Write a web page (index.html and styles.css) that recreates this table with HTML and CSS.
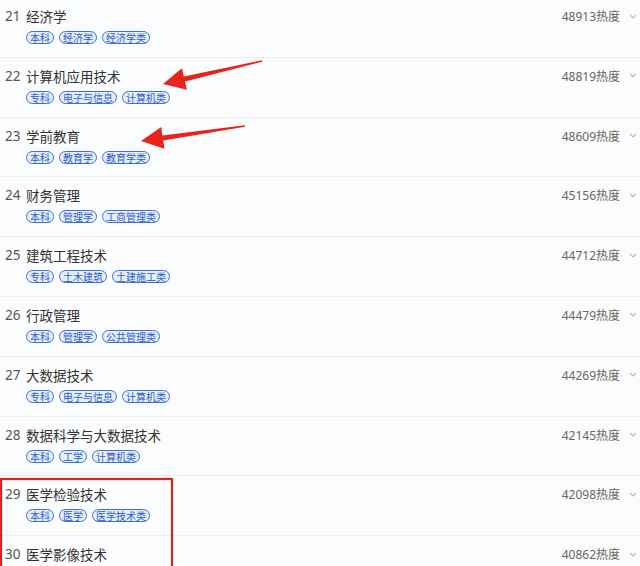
FILE: index.html
```html
<!DOCTYPE html>
<html lang="zh">
<head>
<meta charset="utf-8">
<link rel="stylesheet" href="styles.css">
</head>
<body>
<div class="page">
  <ul class="list">
    <li class="row"><div class="line"><span class="name"><span class="num">21</span>经济学</span><span class="heat">48913热度<svg class="chev" viewBox="0 0 8 5" width="8" height="5"><path d="M1 1 L4 4 L7 1" fill="none" stroke="#b5b9c2" stroke-width="1.1"/></svg></span></div><div class="tags"><span class="tag">本科</span><span class="tag">经济学</span><span class="tag">经济学类</span></div></li>
    <li class="row"><div class="line"><span class="name"><span class="num">22</span>计算机应用技术</span><span class="heat">48819热度<svg class="chev" viewBox="0 0 8 5" width="8" height="5"><path d="M1 1 L4 4 L7 1" fill="none" stroke="#b5b9c2" stroke-width="1.1"/></svg></span></div><div class="tags"><span class="tag">专科</span><span class="tag">电子与信息</span><span class="tag">计算机类</span></div></li>
    <li class="row"><div class="line"><span class="name"><span class="num">23</span>学前教育</span><span class="heat">48609热度<svg class="chev" viewBox="0 0 8 5" width="8" height="5"><path d="M1 1 L4 4 L7 1" fill="none" stroke="#b5b9c2" stroke-width="1.1"/></svg></span></div><div class="tags"><span class="tag">本科</span><span class="tag">教育学</span><span class="tag">教育学类</span></div></li>
    <li class="row"><div class="line"><span class="name"><span class="num">24</span>财务管理</span><span class="heat">45156热度<svg class="chev" viewBox="0 0 8 5" width="8" height="5"><path d="M1 1 L4 4 L7 1" fill="none" stroke="#b5b9c2" stroke-width="1.1"/></svg></span></div><div class="tags"><span class="tag">本科</span><span class="tag">管理学</span><span class="tag">工商管理类</span></div></li>
    <li class="row"><div class="line"><span class="name"><span class="num">25</span>建筑工程技术</span><span class="heat">44712热度<svg class="chev" viewBox="0 0 8 5" width="8" height="5"><path d="M1 1 L4 4 L7 1" fill="none" stroke="#b5b9c2" stroke-width="1.1"/></svg></span></div><div class="tags"><span class="tag">专科</span><span class="tag">土木建筑</span><span class="tag">土建施工类</span></div></li>
    <li class="row"><div class="line"><span class="name"><span class="num">26</span>行政管理</span><span class="heat">44479热度<svg class="chev" viewBox="0 0 8 5" width="8" height="5"><path d="M1 1 L4 4 L7 1" fill="none" stroke="#b5b9c2" stroke-width="1.1"/></svg></span></div><div class="tags"><span class="tag">本科</span><span class="tag">管理学</span><span class="tag">公共管理类</span></div></li>
    <li class="row"><div class="line"><span class="name"><span class="num">27</span>大数据技术</span><span class="heat">44269热度<svg class="chev" viewBox="0 0 8 5" width="8" height="5"><path d="M1 1 L4 4 L7 1" fill="none" stroke="#b5b9c2" stroke-width="1.1"/></svg></span></div><div class="tags"><span class="tag">专科</span><span class="tag">电子与信息</span><span class="tag">计算机类</span></div></li>
    <li class="row"><div class="line"><span class="name"><span class="num">28</span>数据科学与大数据技术</span><span class="heat">42145热度<svg class="chev" viewBox="0 0 8 5" width="8" height="5"><path d="M1 1 L4 4 L7 1" fill="none" stroke="#b5b9c2" stroke-width="1.1"/></svg></span></div><div class="tags"><span class="tag">本科</span><span class="tag">工学</span><span class="tag">计算机类</span></div></li>
    <li class="row"><div class="line"><span class="name"><span class="num">29</span>医学检验技术</span><span class="heat">42098热度<svg class="chev" viewBox="0 0 8 5" width="8" height="5"><path d="M1 1 L4 4 L7 1" fill="none" stroke="#b5b9c2" stroke-width="1.1"/></svg></span></div><div class="tags"><span class="tag">本科</span><span class="tag">医学</span><span class="tag">医学技术类</span></div></li>
    <li class="row"><div class="line"><span class="name"><span class="num">30</span>医学影像技术</span><span class="heat">40862热度<svg class="chev" viewBox="0 0 8 5" width="8" height="5"><path d="M1 1 L4 4 L7 1" fill="none" stroke="#b5b9c2" stroke-width="1.1"/></svg></span></div></li>
  </ul>
  <svg class="marks" width="640" height="566" viewBox="0 0 640 566">
    <polygon fill="#e8231c" points="163,84 181.9,68.3 183.8,76.6 261.8,60.3 262.2,61.7 185,81.4 186.9,89.7"/>
    <polygon fill="#e8231c" points="141,141 161.2,127 162.4,135.4 244.9,125.3 245.1,126.7 163.2,140.4 164.4,148.8"/>
    <rect x="1" y="479" width="171" height="120" fill="none" stroke="#d9251d" stroke-width="2.2"/>
  </svg>
</div>
</body>
</html>
```

FILE: styles.css
```css
html, body {
  margin: 0;
  padding: 0;
  background: #fbfcfd;
}
.page {
  position: relative;
  width: 640px;
  height: 566px;
  overflow: hidden;
  font-family: "Noto Sans", "Noto Sans CJK SC", sans-serif;
}
.list {
  list-style: none;
  margin: -2px 0 0 0;
  padding: 0;
}
.row {
  box-sizing: border-box;
  height: 59.8px;
  padding: 8px 0 0 5px;
  border-bottom: 1px solid #eceef2;
}
.line {
  display: flex;
  justify-content: space-between;
  align-items: center;
  height: 20px;
}
.name {
  font-size: 13.5px;
  color: #333;
  display: flex;
  align-items: center;
}
.num {
  width: 21px;
  font-size: 13.5px;
  color: #555;
}
.heat {
  display: flex;
  align-items: center;
  font-size: 12px;
  color: #666;
  padding-right: 3px;
}
.chev {
  margin-left: 9px;
}
.tags {
  display: flex;
  gap: 5px;
  margin: 5px 0 0 21px;
}
.tag {
  font-family: "Noto Sans CJK SC", sans-serif;
  font-size: 10px;
  line-height: 11px;
  padding: 0 3px;
  border: 1px solid #3d6ed6;
  border-radius: 7px;
  background: #e6eefc;
  color: #2d5cc4;
}
.marks {
  position: absolute;
  left: 0;
  top: 0;
  pointer-events: none;
}
```
